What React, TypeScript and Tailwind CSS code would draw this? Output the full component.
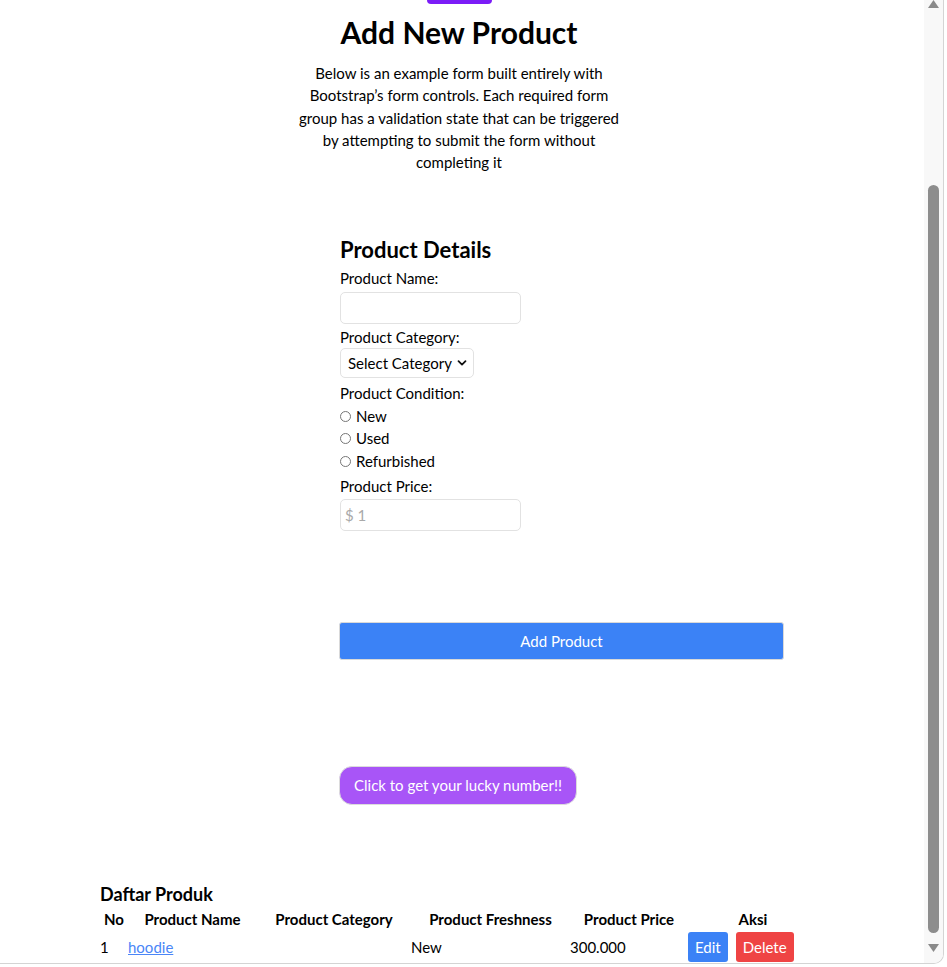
import React from "react";

const font = { fontFamily: '"Lato", "Noto Sans", sans-serif' };

const ChevronDown = () => (
  <svg width="10" height="10" viewBox="0 0 10 10" className="pointer-events-none absolute right-[7px] top-[10px]">
    <path d="M1.5 3.2 L5 6.6 L8.5 3.2" fill="none" stroke="#111" strokeWidth="1.8" strokeLinecap="round" strokeLinejoin="round" />
  </svg>
);

const Radio = ({ label }: { label: string }) => (
  <label className="flex items-center gap-[5px] h-[22.5px]">
    <span className="w-[11px] h-[11px] rounded-full border border-[#767676] bg-white" />
    <span>{label}</span>
  </label>
);

const Scrollbar = () => (
  <div className="w-[19px] h-full bg-[#f8f8f8] flex flex-col items-center relative">
    <svg width="11" height="8" viewBox="0 0 11 8">
      <path d="M0 8 L5.5 0 L11 8 Z" fill="#8a8a8a" />
    </svg>
    <div className="absolute top-[185px] left-[4px] w-[11px] h-[748px] rounded-full bg-[#8d8d8d]" />
    <svg width="11" height="8" viewBox="0 0 11 8" className="absolute top-[944px] left-[4px]">
      <path d="M0 0 L5.5 8 L11 0 Z" fill="#8a8a8a" />
    </svg>
  </div>
);

export default function App() {
  return (
    <div className="w-[947px] h-[967px] bg-white overflow-hidden text-black" style={font}>
      <div className="w-[944px] h-[964px] border-r border-b border-[#d4d4d4] rounded-br-[10px] overflow-hidden flex">
        <div className="w-[924px] h-full flex flex-col text-[15px] leading-[22.5px]">
          <div className="ml-[427px] w-[65px] h-[4px] shrink-0 rounded-b-[6px] bg-[#7b1cf7]" />

          <div className="w-[918px] flex flex-col items-center">
            <h1 className="mt-[10px] text-[30px] leading-[36px] font-bold">Add New Product</h1>
            <p className="mt-[12px] w-[335px] text-center leading-[22.25px]">
              Below is an example form built entirely with Bootstrap’s form controls. Each required form group has a validation state that can be triggered by attempting to submit the form without completing it
            </p>
          </div>

          <form className="ml-[339px] w-[445px] mt-[63px] flex flex-col">
            <h2 className="ml-[1px] text-[22px] leading-[28px] font-bold">Product Details</h2>
            <div className="ml-[1px] flex flex-col">
              <label className="mt-[3px]">Product Name:</label>
              <input type="text" className="mt-[2px] w-[181px] h-[32px] border border-[#e2e2e2] rounded-[5px] px-[5px] outline-none" />
              <label className="mt-[2px]">Product Category:</label>
              <div className="relative w-[134px]">
                <select className="appearance-none w-[134px] h-[30px] border border-[#e2e2e2] rounded-[5px] pl-[7px] pr-[20px] bg-white outline-none">
                  <option>Select Category</option>
                </select>
                <ChevronDown />
              </div>
              <label className="mt-[4px]">Product Condition:</label>
              <Radio label="New" />
              <Radio label="Used" />
              <Radio label="Refurbished" />
              <label className="mt-[3px]">Product Price:</label>
              <input type="text" placeholder="$ 1" className="mt-[1px] w-[181px] h-[32px] border border-[#e2e2e2] rounded-[5px] px-[4px] outline-none placeholder:text-[#a9a9a9]" />
            </div>
            <button type="button" className="mt-[91px] w-[445px] h-[38px] bg-[#3b82f6] text-white rounded-[3px] border border-[#d9d9d9]">
              Add Product
            </button>
          </form>

          <div className="ml-[339px] mt-[106px]">
            <button type="button" className="h-[39px] px-[14px] bg-[#a855f7] text-white rounded-[13px] border border-[#dcdcdc]">
              Click to get your lucky number!!
            </button>
          </div>

          <div className="ml-[100px] mt-[77px]">
            <h3 className="text-[18px] leading-[24px] font-bold">Daftar Produk</h3>
            <table className="border-collapse text-[15px]">
              <thead>
                <tr className="h-[26px]">
                  <th className="w-[28px] p-0 font-bold">No</th>
                  <th className="w-[129px] p-0 font-bold">Product Name</th>
                  <th className="w-[154px] p-0 font-bold">Product Category</th>
                  <th className="w-[159px] p-0 font-bold">Product Freshness</th>
                  <th className="w-[118px] p-0 font-bold">Product Price</th>
                  <th className="w-[130px] p-0 font-bold">Aksi</th>
                </tr>
              </thead>
              <tbody>
                <tr className="h-[30px]">
                  <td className="p-0 align-middle">1</td>
                  <td className="p-0 align-middle">
                    <a href="#" className="text-[#4a86f7] underline">hoodie</a>
                  </td>
                  <td className="p-0" />
                  <td className="p-0 align-middle">New</td>
                  <td className="p-0 align-middle">300.000</td>
                  <td className="p-0 align-middle">
                    <div className="flex gap-[8px]">
                      <button type="button" className="h-[30px] px-[7px] bg-[#3b82f6] text-white rounded-[3px]">Edit</button>
                      <button type="button" className="h-[30px] px-[7px] bg-[#ef4444] text-white rounded-[3px]">Delete</button>
                    </div>
                  </td>
                </tr>
              </tbody>
            </table>
          </div>
        </div>
        <Scrollbar />
      </div>
    </div>
  );
}
